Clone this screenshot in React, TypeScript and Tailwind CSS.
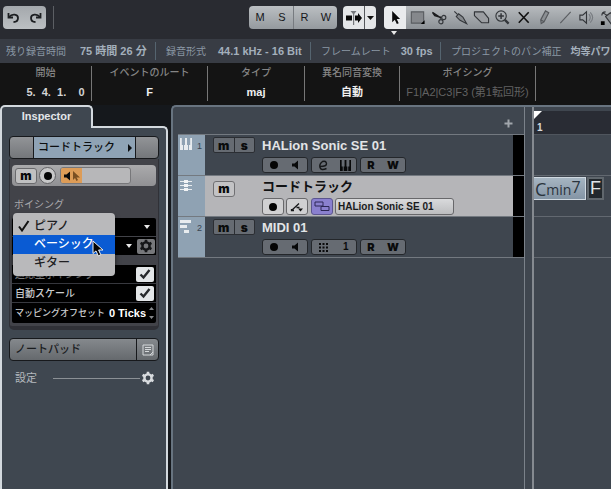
import React from 'react';
import clsx from 'clsx';

const statusItems = [
  { label: '残り録音時間', value: '75 時間 26 分', width: 'w-[156px] pl-[6px] gap-[14px]' },
  { label: '録音形式', value: '44.1 kHz - 16 Bit', width: 'w-[155px] pl-[10px] gap-[12px]' },
  { label: 'フレームレート', value: '30 fps', width: 'w-[130px] pl-[10px] gap-[10px]' },
  { label: 'プロジェクトのパン補正', value: '均等パワ', width: 'pl-[10px] gap-[9px]' },
];

const infoItems = [
  { label: '開始', value: '5.  4.  1.    0', width: 'w-[92px]', tone: 'text-[#d5d5d5] pl-[20px]' },
  { label: 'イベントのルート', value: 'F', width: 'w-[116px]', tone: 'text-[#f0f0f0]' },
  { label: 'タイプ', value: 'maj', width: 'w-[97px]', tone: 'text-[#f0f0f0]' },
  { label: '異名同音変換', value: '自動', width: 'w-[95px]', tone: 'text-[#f0f0f0]' },
  { label: 'ボイシング', value: 'F1|A2|C3|F3 (第1転回形)', width: 'w-[136px]', tone: 'text-[#626262] font-normal' },
];

const Svg = ({ size = 18, children }: { size?: number; children: React.ReactNode }) => (
  <svg width={size} height={size} viewBox="0 0 18 18" fill="none" stroke="#33363a" strokeWidth="1.2" className="shrink-0" aria-hidden="true">
    {children}
  </svg>
);

const tools = [
  {
    name: 'Select',
    width: 'w-[22px] bg-[#e9ebed]',
    icon: <path d="M5.5 2v12l2.8-2.6 2.1 4.6 2-1-2.1-4.4h3.6z" fill="#0b0b0c" stroke="none" />,
  },
  {
    name: 'Range',
    width: 'w-[22px]',
    icon: (
      <>
        <path d="M2.5 3h13v12h-13z" fill="#85888c" stroke="#5a5d61" />
        <path d="M16.5 12v4h-4z" fill="#000" stroke="none" />
      </>
    ),
  },
  {
    name: 'Split',
    width: 'w-[22px]',
    icon: (
      <>
        <path d="M1.500 3.500L11 10M1.500 3.500L4 7l7 2" stroke="#1c1d1f" strokeWidth="1.500" />
        <circle cx="13.500" cy="9" r="2.200" />
        <circle cx="10.500" cy="13.500" r="2.200" />
      </>
    ),
  },
  {
    name: 'Glue',
    width: 'w-[21px]',
    icon: (
      <>
        <path d="M2.500 2.500l3.500 3.500" />
        <path d="M4.500 8L7 5l4.500 3.500 4 7L8.500 12z" fill="#85898d" />
      </>
    ),
  },
  { name: 'Erase', width: 'w-[21px]', icon: <path d="M1.500 3h9.500l5.500 7v4.500H9L1.500 7z" fill="#9b9ea2" strokeLinejoin="round" /> },
  {
    name: 'Zoom',
    width: 'w-[21px]',
    icon: (
      <>
        <circle cx="7.500" cy="7.500" r="5.500" />
        <path d="M4.500 7.500h6M7.500 4.500v6" strokeWidth="1.600" />
        <path d="M11.500 11.500l4 4" strokeWidth="2.400" />
      </>
    ),
  },
  { name: 'Mute', width: 'w-[21px]', icon: <path d="M4 3.500l10.500 11M14.500 3.500L4 14.500" stroke="#111" strokeWidth="1.700" /> },
  { name: 'Draw', width: 'w-[21px]', icon: <path d="M5 11.500l5-9.500 3.500 2-5 9.500L5.500 15.500zM5 11.500l3.500 2" fill="#8c9094" stroke="#55585c" /> },
  { name: 'Line', width: 'w-[21px]', icon: <path d="M3.500 15L14.500 3" stroke="#5a5d61" /> },
  {
    name: 'Play',
    width: 'w-[21px]',
    icon: (
      <>
        <path d="M2 6.500h3L9 3v12l-4-3.500H2z" />
        <path d="M11.500 5.500q3 3.500 0 7M13 3.500q5 5.500 0 11" stroke="#777b80" />
      </>
    ),
  },
  {
    name: 'Color',
    width: 'w-[21px]',
    icon: (
      <>
        <path d="M7 8l5-4 6 5-5 7zM4 4l5 3M3 7q0-4 4-4" fill="#8c9094" />
        <path d="M2 13h4v4H2z" fill="#000" stroke="none" />
      </>
    ),
  },
];

const Undo = ({ flip = false }) => (
  <svg width="13" height="13" viewBox="0 0 13 13" fill="none" stroke="#1c1e21" strokeWidth="1.800" className={clsx(flip && '-scale-x-100')} aria-hidden="true">
    <path d="M2 6c3-3.500 9-3 9 1 0 2.500-2 4-4.500 4" />
    <path d="M1.500 2v4.500H6" />
  </svg>
);

const Gear = ({ color = '#d9dcdf' }) => (
  <svg width="14" height="14" viewBox="0 0 14 14" fill="none" aria-hidden="true">
    <circle cx="7" cy="7" r="3.600" stroke={color} strokeWidth="2.400" />
    <path d="M7 .8v2.400M7 10.800v2.400M1.600 3.900l2.100 1.200M10.300 8.900l2.100 1.200M1.600 10.100l2.100-1.200M10.300 5.100l2.100-1.200" stroke={color} strokeWidth="2.600" />
  </svg>
);

const Speaker = () => (
  <svg width="8" height="10" viewBox="0 0 8 10" aria-hidden="true">
    <path d="M0 3.500h2.500L6 .5v9L2.500 6.500H0z" fill="#08090a" />
  </svg>
);

const Dot = () => <span className="block size-[8px] rounded-full bg-[#050505]" />;

const Keys = ({ color = '#08090a', size = 12 }) => (
  <svg width={size} height={size} viewBox="0 0 12 12" aria-hidden="true">
    <path d="M0 0h1.800v7H3V12H0zM5 0h2v7h1v5H4V7h1zM10.200 0H12v12H9V7h1.200z" fill={color} />
  </svg>
);

function Toolbar() {
  return (
    <header className="flex h-[39px] items-start bg-[#292b31] pt-[6px] pl-[3px]">
      <div className="flex h-[23px] w-[43px] shrink-0 items-center rounded-sm bg-linear-to-b from-[#a4a8ac] to-[#bcc0c3]">
        <button aria-label="Undo" className="flex h-full flex-1 items-center justify-center"><Undo /></button>
        <button aria-label="Redo" className="flex h-full flex-1 items-center justify-center"><Undo flip /></button>
      </div>
      <div className="ml-[7px] h-[23px] w-px shrink-0 bg-[#5c5f64]" />
      <div className="ml-[195px] flex h-[23px] shrink-0 overflow-hidden rounded-sm bg-linear-to-b from-[#bbbfc2] to-[#959a9f] text-[11px] text-[#15171a]">
        {['M', 'S', 'R', 'W'].map((name) => (
          <button key={name} className={clsx('w-[22px]', name === 'R' && 'border-l border-[#777b80]')}>{name}</button>
        ))}
      </div>
      <div className="ml-[6px] flex h-[23px] shrink-0 overflow-hidden rounded-sm bg-[#e4e6e8]">
        <button aria-label="Auto-scroll" className="flex w-[22px] items-center justify-center border-r border-[#55585c]">
          <svg width="18" height="16" viewBox="0 0 18 16" aria-hidden="true">
            <path d="M1 5.500h6v5H1zM10 5.500h3V3l4 5-4 5v-2.500h-3z" fill="#080808" />
            <path d="M5.500 1h6L9.200 4v11H8V4z" fill="#74777b" />
          </svg>
        </button>
        <button aria-label="Auto-scroll options" className="flex w-[11px] items-center justify-center">
          <svg width="7" height="4" viewBox="0 0 7 4" aria-hidden="true"><path d="M0 0h7L3.500 4z" fill="#111" /></svg>
        </button>
      </div>
      <div className="relative ml-[8px] flex min-w-0 flex-1">
        <div className="flex h-[23px] min-w-0 flex-1 overflow-hidden rounded-l-sm bg-linear-to-b from-[#b7bbbe] to-[#8d9297]">
          {tools.map((tool) => (
            <button key={tool.name} aria-label={tool.name} className={clsx('flex shrink-0 items-center justify-center', tool.width)}>
              <Svg size={17}>{tool.icon}</Svg>
            </button>
          ))}
        </div>
        <svg width="6" height="4" viewBox="0 0 6 4" className="absolute top-[25px] left-[7px]" aria-hidden="true"><path d="M0 0h6L3 4z" fill="#e8e8e8" /></svg>
      </div>
    </header>
  );
}

function StatusLine() {
  return (
    <div className="flex h-[24px] items-center overflow-hidden bg-[#383c44] whitespace-nowrap">
      {statusItems.map((item) => (
        <div key={item.label} className={clsx('flex h-[18px] shrink-0 items-center border-r border-[#55646f] last:border-r-0 last:text-[10px] text-[11px]', item.width)}>
          <span className="text-[10px] text-[#8b98a5]">{item.label}</span>
          <span className="font-bold text-[#a3afbb]">{item.value}</span>
        </div>
      ))}
    </div>
  );
}

function InfoLine() {
  return (
    <div className="flex h-[42px] overflow-hidden bg-[#141414] pt-[3px] text-center whitespace-nowrap">
      {infoItems.map((item) => (
        <div key={item.label} className={clsx('h-[35px] shrink-0 border-r border-[#777]', item.width)}>
          <div className="text-[10px] leading-[14px] font-medium text-[#858585]">{item.label}</div>
          <div className={clsx('pt-[3px] text-[11px] leading-[18px] font-bold whitespace-pre', item.tone)}>{item.value}</div>
        </div>
      ))}
    </div>
  );
}

function VoicingMenu() {
  return (
    <ul role="listbox" aria-label="ボイシング" className="absolute top-[-5px] left-[1px] z-10 w-[102px] overflow-hidden rounded-[4px] bg-[#b9b9bb] py-[4px] text-[12px] leading-[18px] font-medium text-[#202022] shadow-md shadow-black/60">
      <li role="option" aria-selected="true" className="flex h-[18px] items-center pl-[5px]">
        <svg width="12" height="12" viewBox="0 0 12 12" fill="none" stroke="#111" strokeWidth="2" aria-hidden="true"><path d="M1 6.500L4 10.500 10.500 1" /></svg>
        <span className="pl-[4px]">ピアノ</span>
      </li>
      <li role="option" aria-selected="false" className="h-[19px] bg-[#0a5bd3] pl-[21px] text-white">ベーシック</li>
      <li role="option" aria-selected="false" className="h-[18px] pl-[21px]">ギター</li>
    </ul>
  );
}

const Caret = () => (
  <svg width="6" height="4" viewBox="0 0 6 4" aria-hidden="true"><path d="M0 0h6L3 4z" fill="#e8e8e8" /></svg>
);

function CheckRow({ id, label }: { id: string; label: string }) {
  return (
    <div className="flex h-[19px] items-center justify-between border-b border-[#38393f] pr-[2px] pl-[3px]">
      <label htmlFor={id}>{label}</label>
      <span className="relative flex">
        <input id={id} type="checkbox" defaultChecked className="h-[15px] w-[18px] appearance-none rounded-[2px] bg-[#e3e6e8]" />
        <svg width="12" height="11" viewBox="0 0 12 11" fill="none" stroke="#26282b" strokeWidth="2.400" className="pointer-events-none absolute top-[2px] left-[3px]" aria-hidden="true">
          <path d="M1.500 5.500l3 3L10.500 1" />
        </svg>
      </span>
    </div>
  );
}

function Inspector() {
  return (
    <aside className="flex w-[168px] shrink-0 flex-col">
      <div className="flex h-[31px] items-stretch">
        <h2 className="w-[93px] rounded-t-[5px] border-2 border-b-0 border-[#d3d9de] bg-[#3f4750] pt-px text-center text-[11px] leading-[16px] font-bold text-[#e3e6e9]">Inspector</h2>
        <div className="flex flex-1 flex-col justify-end">
          <div className="-ml-[2px] h-[10px] rounded-tr-[5px] border-t-2 border-r-2 border-[#d3d9de] bg-[#3f4750]" />
        </div>
      </div>
      <div className="flex-1 border-x-2 border-[#d3d9de] bg-[#3f4750] px-[7px]">
        <div className="flex h-[23px] overflow-hidden rounded-[4px] border border-[#17191c] bg-linear-to-b from-[#929497] to-[#74777b]">
          <button aria-label="Track handle" className="w-[23px]" />
          <button className="flex flex-1 items-center justify-between border-x border-[#17191c] bg-[#8fa3b5] pr-[3px] pl-[4px] text-[11px] font-medium text-[#0c0e10]">
            コードトラック
            <svg width="4" height="8" viewBox="0 0 4 8" aria-hidden="true"><path d="M0 0l4 4-4 4z" fill="#0c0e10" /></svg>
          </button>
          <button aria-label="Track options" className="w-[22px]" />
        </div>

        <div className="rounded-b-[5px] border-x border-b-4 border-[#303137] bg-[#424349] px-[2px] pt-[6px] pb-[3px]">
          <div className="flex h-[21px] items-center gap-[2px] rounded-[4px] bg-linear-to-b from-[#aaaaac] to-[#919194] pl-[3px]">
            <button className="h-[16px] w-[22px] rounded-[3px] border border-[#6a6a6d] bg-[#c0c0c1] font-[Inter] text-[12px] leading-[12px] font-black text-[#0a0a0a]">m</button>
            <button aria-label="Record" className="flex size-[17px] items-center justify-center rounded-full border border-[#606063] bg-[#c8c8c9]"><Dot /></button>
            <div className="ml-[2px] flex h-[17px] w-[71px] overflow-hidden rounded-[3px] border border-[#77777a] bg-[#b7b7b9]">
              <button aria-label="Monitor" className="flex w-[21px] items-center justify-center bg-[#dd9c57]">
                <Speaker />
                <svg width="8" height="10" viewBox="0 0 8 10" aria-hidden="true"><path d="M1 0v9l2-2 1.500 3 1.500-1-1.500-2.500H8z" fill="#7a4f22" /></svg>
              </button>
            </div>
          </div>

          <div className="pt-[11px] pb-[5px] pl-[2px] text-[10px] leading-[16px] text-[#a9a9ac]">ボイシング</div>

          <div className="relative">
            <button aria-label="ボイシング" aria-haspopup="listbox" aria-expanded="true" className="flex h-[18px] w-full items-center justify-end rounded-t-[2px] bg-black pr-[6px]"><Caret /></button>
            <div className="mt-px flex h-[18px] items-center justify-end gap-[5px] bg-black pr-px">
              <button aria-label="サブセット" aria-haspopup="listbox"><Caret /></button>
              <button aria-label="設定" className="flex h-[15px] w-[18px] items-center justify-center rounded-[2px] bg-[#77787b]"><Gear color="#151618" /></button>
            </div>
            <VoicingMenu />
            <svg width="13" height="17" viewBox="0 0 13 17" className="absolute top-[22px] left-[80px] z-20" aria-hidden="true">
              <path d="M1 1v12.500l3-2.600 2.300 5 2.500-1.200L6.600 10H11z" fill="#050505" stroke="#f2f2f2" />
            </svg>
          </div>

          <div className="mt-[10px] rounded-b-[2px] bg-black text-[10px] leading-[19px] font-medium text-[#c9cbcd]">
            <CheckRow id="adaptive" label="適応型ボイシング" />
            <CheckRow id="autoscale" label="自動スケール" />
            <div className="flex h-[20px] items-center pl-[3px] whitespace-nowrap">
              <label htmlFor="offset" className="w-[92px] shrink-0 text-[9px]">マッピングオフセット</label>
              <input id="offset" defaultValue="0 Ticks" className="w-[39px] min-w-0 bg-transparent text-right text-[11px] font-bold text-white" />
              <svg width="7" height="14" viewBox="0 0 7 14" className="ml-auto" fill="#85878a" aria-hidden="true"><path d="M0 4l2.500-3L5 4zM0 10l2.500 3L5 10z" /></svg>
            </div>
          </div>
        </div>

        <button className="mt-[8px] flex h-[23px] w-full items-stretch overflow-hidden rounded-[4px] border border-[#17191c] bg-linear-to-b from-[#85898d] to-[#65696d] text-[11px] font-medium text-[#1a1c1f]">
          <span className="flex flex-1 items-center pl-[5px]">ノートパッド</span>
          <span className="flex w-[22px] items-center justify-center border-l border-[#17191c]">
            <svg width="12" height="12" viewBox="0 0 12 12" fill="none" stroke="#d5d8da" aria-hidden="true">
              <path d="M1 1h10v10H1zM3 3.500h6M3 5.500h6M3 7.500h4M11 8l-3 3" />
            </svg>
          </span>
        </button>

        <div className="mt-[9px] flex items-center pr-[4px] pl-[6px]">
          <span className="w-[38px] text-[11px] leading-[16px] text-[#b4b9be]">設定</span>
          <span className="h-px flex-1 bg-[#8b9095]" />
          <button aria-label="設定" className="ml-px"><Gear /></button>
        </div>
      </div>
    </aside>
  );
}

const groupClass = 'flex h-[16px] items-center justify-around rounded-[3px] border border-[#24272b] bg-[#666b72] w-[46px]';
const letterClass = 'font-[Inter] text-[12px] leading-[13px] font-black text-[#0a0b0c]';

function ReadWrite() {
  return (
    <div className={groupClass}>
      <button className="font-[Inter] text-[11px] leading-[13px] font-black text-[#0a0b0c]">R</button>
      <button className="font-[Inter] text-[11px] leading-[13px] font-black text-[#0a0b0c]">W</button>
    </div>
  );
}

function MuteSolo() {
  return (
    <div className="mt-[2px] flex h-[16px] w-[42px] shrink-0 rounded-[2px] border border-[#2b2e33] bg-[#666b72]">
      <button className={clsx('flex-1 border-r border-[#2b2e33]', letterClass)}>m</button>
      <button className={clsx('flex-1', letterClass)}>s</button>
    </div>
  );
}

function RecMonitor() {
  return (
    <div className={groupClass}>
      <button aria-label="Record"><Dot /></button>
      <button aria-label="Monitor"><Speaker /></button>
    </div>
  );
}

type TrackProps = { icon: React.ReactNode; number?: string; selected?: boolean; buttons: React.ReactNode; name: string; children: React.ReactNode };

function Track({ icon, number, selected, buttons, name, children }: TrackProps) {
  return (
    <li className="flex h-[41px] border-b border-[#737980]">
      <div className="flex w-[27px] shrink-0 justify-between bg-[#8fa2b3] pt-[3px] pr-[3px] pl-[2px]">
        {icon}
        <span className="pt-[2px] text-[9px] leading-[12px] text-[#384451]">{number}</span>
      </div>
      <div className={clsx('flex flex-1 pl-[8px]', selected ? 'bg-[#b5b5b8]' : 'bg-[#3f464f]')}>
        <div className="w-[49px] shrink-0">{buttons}</div>
        <div className="min-w-0">
          <div className={clsx('h-[22px] text-[13px] leading-[22px] font-bold whitespace-nowrap', selected ? 'text-[#111214]' : 'text-[#e2e4e6]')}>{name}</div>
          <div className="flex gap-[3px]">{children}</div>
        </div>
      </div>
      <div className="w-[11px] shrink-0 bg-black" />
    </li>
  );
}

function TrackList() {
  return (
    <section className="w-[347px] shrink-0 border-r border-[#7b828a]">
      <div className="flex h-[28px] items-center justify-end border-b border-[#737980] pt-[6px] pr-[11px]">
        <button aria-label="Add track">
          <svg width="9" height="9" viewBox="0 0 9 9" stroke="#a1a6ac" strokeWidth="2" aria-hidden="true"><path d="M4.500 .5v8M.5 4.500h8" /></svg>
        </button>
      </div>
      <ul>
        <Track icon={<Keys color="#e8ecef" />} number="1" name="HALion Sonic SE 01" buttons={<MuteSolo />}>
          <RecMonitor />
          <div className={groupClass}>
            <button aria-label="Edit instrument">
              <svg width="11" height="11" viewBox="0 0 11 11" fill="none" stroke="#16181a" strokeWidth="1.400" aria-hidden="true"><path d="M2 6.500q7 0 6.500-3T4.500 1.500Q1 4 2 7.500t6.500 1" /></svg>
            </button>
            <button aria-label="Instrument keys"><Keys size={11} /></button>
          </div>
          <ReadWrite />
        </Track>
        <Track
          selected
          icon={
            <svg width="12" height="14" viewBox="0 0 12 14" aria-hidden="true">
              <path d="M0 2h12v1H0zM0 6h12v1H0zM0 10h12v1H0z" fill="#e8ecef" />
              <path d="M4 1h4v3H4zM4 5h4v3H4zM4 9h4v3H4z" fill="#f1f3f5" />
            </svg>
          }
          name="コードトラック"
          buttons={<button className={clsx('mt-[2px] h-[16px] w-[22px] rounded-[3px] border border-[#707073] bg-[#c3c3c5]', letterClass)}>m</button>}
        >
          <button aria-label="Record" className="flex h-[17px] w-[22px] items-center justify-center rounded-[3px] border border-[#68686b] bg-[#d0d0d2]"><Dot /></button>
          <button aria-label="Acoustic feedback" className="-ml-px flex h-[17px] w-[22px] items-center justify-center rounded-[3px] border border-[#68686b] bg-[#d0d0d2]">
            <svg width="14" height="12" viewBox="0 0 14 12" fill="none" stroke="#17181a" strokeWidth="1.300" aria-hidden="true">
              <path d="M1.500 9.500L9 2.500M1.500 8v1.500H4M6.500 6.500h3" />
              <path d="M8 7.500h5l-2.500 3z" fill="#111" stroke="none" />
            </svg>
          </button>
          <button aria-label="Resolve display conflicts" className="flex h-[17px] w-[22px] items-center justify-center rounded-[3px] border border-[#5c568f] bg-[#8a80cf]">
            <svg width="16" height="11" viewBox="0 0 16 11" fill="none" stroke="#2c2756" aria-hidden="true"><path d="M1 1h8v4H1zM7 5.500h8v4H7z" /></svg>
          </button>
          <select aria-label="Output" className="-ml-px h-[17px] w-[119px] appearance-none rounded-[3px] border border-[#68686b] bg-linear-to-b from-[#d9dadc] to-[#bcbdbf] pl-[2px] text-[10px] leading-[14px] font-bold text-[#1a1b1d]">
            <option>HALion Sonic SE 01</option>
          </select>
        </Track>
        <Track
          icon={<svg width="12" height="13" viewBox="0 0 12 13" fill="#e8ecef" aria-hidden="true"><path d="M0 0h11v3H0zM0 5h7v3H0zM4 10h5v3H4z" /></svg>}
          number="2"
          name="MIDI 01"
          buttons={<MuteSolo />}
        >
          <RecMonitor />
          <div className={groupClass}>
            <svg width="9" height="9" viewBox="0 0 9 9" fill="#0a0b0c" aria-hidden="true"><path d="M0 0h2v2H0zM3.500 0h2v2h-2zM7 0h2v2H7zM0 3.500h2v2H0zM3.500 3.500h2v2h-2zM7 3.500h2v2H7zM0 7h2v2H0zM3.500 7h2v2h-2zM7 7h2v2H7z" /></svg>
            <span className="text-[10px] leading-[14px] font-bold text-[#0a0b0c]">1</span>
          </div>
          <ReadWrite />
        </Track>
      </ul>
    </section>
  );
}

function Timeline() {
  return (
    <section className="ml-[7px] min-w-0 flex-1 border-l-2 border-[#858a90]">
      <div className="mt-[4px] flex h-[24px] border-b border-[#4f555d] bg-[#292c34]">
        <div className="text-[10px] leading-[12px] font-bold text-[#d8dadc]">
          <svg width="8" height="8" viewBox="0 0 8 8" aria-hidden="true"><path d="M0 0h8L0 8z" fill="#fff" /></svg>
          <span className="block pt-[3px] pl-[3px]">1</span>
        </div>
      </div>
      <div className="h-[41px] border-b border-[#626870]" />
      <div className="flex h-[41px] items-start gap-px overflow-hidden border-b border-[#626870] pt-px">
        <button className="flex h-[23px] w-[52px] shrink-0 items-center border border-l-0 border-[#d0d9e1] bg-linear-to-b from-[#a6b5c2] to-[#8495a5] pl-px font-[Open_Sans] text-[18px] leading-[20px] text-[#2a343d]">
          C<span className="pt-[3px] text-[14px]">min</span><span className="pb-[3px] text-[16px]">7</span>
        </button>
        <button className="h-[23px] w-[17px] shrink-0 border-2 border-[#60676d] bg-[#22282d] text-[18px] leading-[19px] text-[#e0e5e9]">F</button>
      </div>
      <div className="h-[41px] border-b border-[#626870]" />
    </section>
  );
}

export default function App() {
  return (
    <div className="flex min-h-screen flex-col overflow-hidden bg-[#15181c] font-['Liberation_Sans','Noto_Sans_CJK_JP',sans-serif]">
      <Toolbar />
      <StatusLine />
      <InfoLine />
      <main className="flex flex-1">
        <Inspector />
        <div className="ml-[3px] flex min-w-0 flex-1 rounded-tl-[5px] border-t-2 border-l-2 border-[#687480] bg-[#3f464f] pl-[5px]">
          <TrackList />
          <Timeline />
        </div>
      </main>
    </div>
  );
}
